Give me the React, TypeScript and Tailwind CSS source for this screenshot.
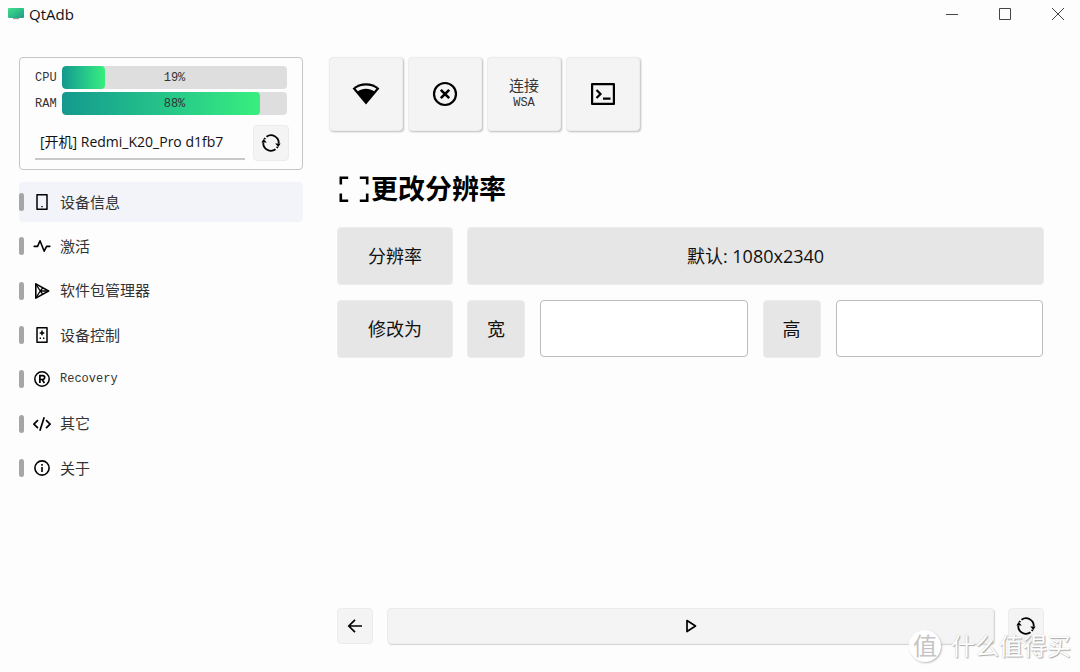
import React from 'react';

interface IconProps {
  className?: string;
}

function LogoIcon() {
  return (
    <svg viewBox="0 0 16 12" className="h-3 w-4 shrink-0" aria-hidden="true">
      <defs>
        <linearGradient id="logo" x1="0" y1="0" x2="1" y2="1">
          <stop offset="0" stopColor="#3fe08a" />
          <stop offset="1" stopColor="#1f9c86" />
        </linearGradient>
      </defs>
      <rect width="16" height="10" rx="1" fill="url(#logo)" />
      <path d="M5 10h6v1.2H5z" fill="#9a9a9a" />
    </svg>
  );
}

function PhoneIcon() {
  return (
    <svg viewBox="0 0 18 18" className="size-[18px]" fill="none" stroke="currentColor" strokeWidth="1.5" strokeLinejoin="round">
      <path d="M4 1.8h10v14.4H4z" />
      <path d="M8.3 13.6h1.4" strokeWidth="1.2" />
    </svg>
  );
}

function PulseIcon() {
  return (
    <svg viewBox="0 0 18 18" className="size-[18px]" fill="none" stroke="currentColor" strokeWidth="1.6" strokeLinejoin="round" strokeLinecap="round">
      <path d="M1.2 9.4h3.4L7 3.8l4.2 10.4 2.4-4.8h3.2" />
    </svg>
  );
}

function PackageIcon() {
  return (
    <svg viewBox="0 0 18 18" className="size-[18px]" fill="none" stroke="currentColor" strokeWidth="1.6" strokeLinejoin="round">
      <path d="M2.8 1.9 15.6 9 2.8 16.1z" />
      <path d="m3 2.200 4.200 6.800L3 15.800M7.200 9h8M7.200 9l2.600-3.200M7.200 9l2.600 3.200" strokeWidth="1.300" />
    </svg>
  );
}

function RemoteIcon() {
  return (
    <svg viewBox="0 0 18 18" className="size-[18px]" fill="none" stroke="currentColor" strokeWidth="1.5" strokeLinejoin="round">
      <path d="M4 1.8h10v14.4H4z" />
      <path d="M9 4.6v4.600M6.700 6.9h4.600" />
      <path d="M6.6 12.2h1.400M10 12.2h1.400" strokeWidth="1.4" />
    </svg>
  );
}

function RegisteredIcon() {
  return (
    <svg viewBox="0 0 18 18" className="size-[18px]" fill="none" stroke="currentColor" strokeWidth="1.5">
      <circle cx="9" cy="9" r="7.2" />
      <path d="M6.9 13V5.6h2.800a1.9 1.9 0 0 1 0 3.9H6.900M9.2 9.5l2.2 3.5" strokeWidth="1.7" />
    </svg>
  );
}

function CodeIcon() {
  return (
    <svg viewBox="0 0 18 18" className="size-[18px]" fill="none" stroke="currentColor" strokeWidth="1.7" strokeLinejoin="round">
      <path d="M5 5.2.9 9.2 5 13.2M13 5.2l4.1 4-4.1 4M11.2 2.2 6.9 15.8" />
    </svg>
  );
}

function InfoIcon() {
  return (
    <svg viewBox="0 0 18 18" className="size-[18px]" fill="none" stroke="currentColor" strokeWidth="1.6">
      <circle cx="9" cy="9" r="7.1" />
      <path d="M9 8v5M9 5v1.8" />
    </svg>
  );
}

function RefreshIcon({ className }: IconProps) {
  return (
    <svg viewBox="0 0 20 20" className={className} fill="none" stroke="currentColor" strokeWidth="1.8" aria-hidden="true">
      <path d="M5.500 3.700A7.700 7.700 0 0 1 17.700 10.500M14.500 16.300A7.700 7.700 0 0 1 2.300 9.500M3.300 6.200l.9-1.300M16.700 13.800l-.9 1.300" />
      <path d="m14.2 10.4 5.400.2-2.200 3.400zM5.800 9.6l-5.400-.2L2.600 6z" fill="currentColor" stroke="none" />
    </svg>
  );
}

function WifiIcon() {
  return (
    <svg viewBox="0 0 28 24" className="h-6 w-7" aria-hidden="true">
      <path d="M14 22.5.6 6.5C4.2 3.1 9 1.2 14 1.2s9.8 1.9 13.4 5.3z" fill="currentColor" />
      <path d="M3.6 6.600C6.5 4.5 10.100 3.4 14 3.400s7.500 1.100 10.400 3.200l-2.200 2.700C19.800 7.700 17 6.800 14 6.800s-5.800.9-8.200 2.500z" fill="#f4f4f4" />
    </svg>
  );
}

function CloseCircleIcon() {
  return (
    <svg viewBox="0 0 26 26" className="size-[26px]" fill="none" stroke="currentColor" strokeWidth="2.2" aria-hidden="true">
      <circle cx="13" cy="13" r="11" />
      <path d="m8.8 8.8 8.4 8.4M17.2 8.8l-8.4 8.4" strokeWidth="2.6" />
    </svg>
  );
}

function TerminalIcon() {
  return (
    <svg viewBox="0 0 26 26" className="size-[26px]" fill="none" stroke="currentColor" strokeWidth="2.2" aria-hidden="true">
      <path d="M2.1 3.1h21.8v19.8H2.1z" strokeLinejoin="round" />
      <path d="m6.5 9 4 4-4 4M13 17.6h7.5" />
    </svg>
  );
}

function FrameIcon() {
  return (
    <svg viewBox="0 0 30 28" className="h-7 w-[30px]" fill="none" stroke="currentColor" strokeWidth="2.6" aria-hidden="true">
      <path d="M1.8 9.5V2.8h7.4M20.8 2.8h7.4v6.7M28.2 18.5v7.2h-7.4M9.2 25.7H1.8v-7.2" />
    </svg>
  );
}

const menu = [
  { label: '设备信息', icon: PhoneIcon },
  { label: '激活', icon: PulseIcon },
  { label: '软件包管理器', icon: PackageIcon },
  { label: '设备控制', icon: RemoteIcon },
  { label: 'Recovery', icon: RegisteredIcon },
  { label: '其它', icon: CodeIcon },
  { label: '关于', icon: InfoIcon },
];

const mono = "font-['Liberation_Mono',monospace] text-xs";
const han = "font-['Noto_Sans_CJK_SC',sans-serif] text-[15px]";
const raised = 'flex items-center justify-center rounded border border-[#ececec] bg-[#f4f4f4] text-black';
const toolButton = `${raised} size-[74px] shadow-[1px_1px_2px_#bdbdbd]`;
const smallButton = `${raised} size-9 shrink-0`;
const cell = 'flex h-[58px] items-center justify-center rounded border border-[#ececec] bg-[#e6e6e6]';
const field = 'mx-px h-[57px] min-w-0 flex-1 rounded border border-[#bcbcbc] bg-white px-3 outline-none';

function UsageBar({ label, value }: { label: string; value: number }) {
  return (
    <div className={`flex h-[23px] items-center text-[#333] ${mono}`}>
      <span className="w-[27px] shrink-0">{label}</span>
      <div className="relative h-full flex-1 overflow-hidden rounded bg-[#dedede]">
        <div className="h-full rounded bg-linear-to-r from-[#15998e] to-[#38ef7d]" style={{ width: `${value}%` }} />
        <span className="absolute inset-0 flex items-center justify-center">{value}%</span>
      </div>
    </div>
  );
}

function TitleBar() {
  return (
    <header className="flex h-7 items-center pl-2">
      <LogoIcon />
      <span className="ml-[5px] text-[15px] leading-5">QtAdb</span>
      <div className="ml-auto flex gap-[9px] text-[#444]">
        <button aria-label="最小化" className="flex h-7 w-11 items-center justify-center">
          <svg viewBox="0 0 12 12" className="size-3" stroke="currentColor"><path d="M0 6.5h12" /></svg>
        </button>
        <button aria-label="最大化" className="flex h-7 w-11 items-center justify-center">
          <svg viewBox="0 0 12 12" className="size-3" fill="none" stroke="currentColor"><path d="M.5.5h11v11H.5z" /></svg>
        </button>
        <button aria-label="关闭" className="flex h-7 w-11 items-center justify-center">
          <svg viewBox="0 0 12 12" className="size-3" stroke="currentColor"><path d="m0 0 12 12M12 0 0 12" /></svg>
        </button>
      </div>
    </header>
  );
}

function Sidebar() {
  return (
    <aside className="w-[284px] shrink-0">
      <div className="rounded border border-[#c4c4c4] py-2 pr-[13px] pl-[15px]">
        <div className="flex flex-col gap-[3px] pr-0.5">
          <UsageBar label="CPU" value={19} />
          <UsageBar label="RAM" value={88} />
        </div>
        <div className="mt-[10px] flex gap-2">
          <select aria-label="设备" className="h-[35px] min-w-0 flex-1 appearance-none border-b-2 border-[#c8c8c8] bg-transparent pl-[5px] text-sm outline-none">
            <option>[开机] Redmi_K20_Pro d1fb7</option>
          </select>
          <button aria-label="刷新设备" className={smallButton}>
            <RefreshIcon className="size-5" />
          </button>
        </div>
      </div>

      <nav className="mt-3 flex h-[306px] flex-col justify-between">
        {menu.map(({ label, icon: Icon }, i) => (
          <a
            key={label}
            href="#"
            className={`flex h-10 items-center rounded text-black ${i === 0 ? 'bg-[#f3f4f9]' : ''}`}
          >
            <span className="h-[18px] w-[5px] rounded-full bg-[#a6a6a6]" />
            <span className="ml-[9px] w-[18px]"><Icon /></span>
            <span className={`ml-[9px] text-[#333] ${label === 'Recovery' ? mono : han}`}>{label}</span>
          </a>
        ))}
      </nav>
    </aside>
  );
}

function Content() {
  return (
    <main className="flex min-w-0 flex-1 flex-col pr-9">
      <div className="flex gap-[5px]">
        <button aria-label="无线连接" className={toolButton}><WifiIcon /></button>
        <button aria-label="断开连接" className={toolButton}><CloseCircleIcon /></button>
        <button className={`${toolButton} flex-col`}>
          <span className={`leading-[18px] text-[#333] ${han}`}>连接</span>
          <span className={`leading-[18px] text-[#333] ${mono}`}>WSA</span>
        </button>
        <button aria-label="终端" className={toolButton}><TerminalIcon /></button>
      </div>

      <section className="pl-2 text-lg">
        <h1 className="mt-10 flex items-center gap-0.5 pl-0.5 text-[27px] leading-9 font-bold text-black">
          <FrameIcon />
          更改分辨率
        </h1>
        <div className="mt-5 flex gap-[14px]">
          <div className={`${cell} w-[116px] shrink-0`}>分辨率</div>
          <div className={`${cell} flex-1`}>默认: 1080x2340</div>
        </div>
        <div className="mt-[15px] flex gap-[14px]">
          <div className={`${cell} w-[116px] shrink-0`}>修改为</div>
          <label htmlFor="width" className={`${cell} w-[58px] shrink-0`}>宽</label>
          <input id="width" type="text" className={field} />
          <label htmlFor="height" className={`${cell} w-[58px] shrink-0`}>高</label>
          <input id="height" type="text" className={field} />
        </div>
      </section>

      <div className="mt-auto flex gap-[14px] pl-2">
        <button aria-label="返回" className={smallButton}>
          <svg viewBox="0 0 16 16" className="size-4" fill="none" stroke="currentColor" strokeWidth="1.7"><path d="M15 8H2M8 1.8 1.8 8 8 14.2" /></svg>
        </button>
        <button aria-label="执行" className={`${raised} h-9 flex-1 shadow-[1px_1px_1px_#d4d4d4]`}>
          <svg viewBox="0 0 14 16" className="h-4 w-[14px]" fill="none" stroke="currentColor" strokeWidth="1.7" strokeLinejoin="round"><path d="M3 2.5 11.5 8 3 13.5z" /></svg>
        </button>
        <button aria-label="刷新" className={smallButton}>
          <RefreshIcon className="size-5" />
        </button>
      </div>
    </main>
  );
}

function Watermark() {
  return (
    <div className="pointer-events-none absolute right-[9px] bottom-[10px] flex items-center gap-[10px] text-2xl leading-8 text-white [text-shadow:1px_1px_1px_#aaa,0_0_1px_#bbb]">
      <span className="flex size-8 items-center justify-center rounded-full bg-white text-[#c4c4c4] shadow-[1px_1px_2px_#bbb] [text-shadow:none]">值</span>
      <span>什么值得买</span>
    </div>
  );
}

export default function App() {
  return (
    <div className="relative flex min-h-screen flex-col bg-[#fdfdfd] font-['Open_Sans','Noto_Sans_CJK_SC',sans-serif] text-[#111]">
      <TitleBar />
      <div className="flex flex-1 gap-[26px] pt-[29px] pb-7 pl-[19px]">
        <Sidebar />
        <Content />
      </div>
      <Watermark />
    </div>
  );
}
